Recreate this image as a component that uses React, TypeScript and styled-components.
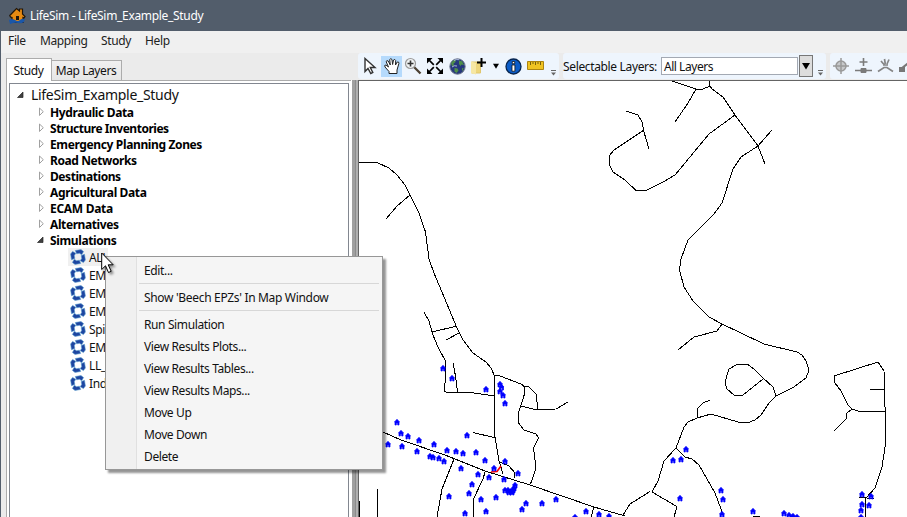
import React from "react";
import styled, { createGlobalStyle } from "styled-components";

const Global = createGlobalStyle`
  * { box-sizing: border-box; }
  html, body { margin: 0; padding: 0; overflow: hidden; }
  body { font-family: "Noto Sans", "Open Sans", sans-serif; font-size: 12px; color: #111; }
`;

const Label = styled.span<{ $track?: number }>`
  letter-spacing: ${(p) => p.$track ?? -0.35}px;
  white-space: pre;
`;

const Window = styled.div`
  width: 907px;
  height: 517px;
  overflow: hidden;
  display: flex;
  flex-direction: column;
  background: #ebebeb;
  border-left: 1px solid #525d6b;
`;

const TitleBar = styled.header`
  height: 31px;
  flex: none;
  display: flex;
  align-items: center;
  gap: 4px;
  padding-left: 8px;
  background: #525d6b;
  color: #fff;
`;

const MenuBar = styled.nav`
  height: 22px;
  flex: none;
  display: flex;
  align-items: center;
  padding: 0 0 3px 7px;
  background: #f0f0f0;
  color: #222;
`;

const MenuEntry = styled.div<{ $w: number }>`
  width: ${(p) => p.$w}px;
`;

const Body = styled.main`
  flex: 1;
  min-height: 0;
  display: flex;
`;

const Sidebar = styled.aside`
  width: 350px;
  flex: none;
  display: flex;
  flex-direction: column;
  padding: 5px 0 0 5px;
`;

const Tabs = styled.div`
  display: flex;
  align-items: flex-end;
  height: 22px;
  flex: none;
`;

const Tab = styled.div<{ $active?: boolean; $w: number }>`
  width: ${(p) => p.$w}px;
  height: ${(p) => (p.$active ? 23 : 20)}px;
  margin-bottom: ${(p) => (p.$active ? -1 : 0)}px;
  position: relative;
  z-index: ${(p) => (p.$active ? 1 : 0)};
  display: flex;
  align-items: center;
  justify-content: center;
  border: 1px solid #acacac;
  border-left-width: ${(p) => (p.$active ? 1 : 0)}px;
  border-bottom: 0;
  padding-right: 1px;
  background: ${(p) => (p.$active ? "#fff" : "linear-gradient(#f0f0f0, #e6e6e6)")};
`;

const TabPage = styled.div`
  flex: 1;
  min-height: 0;
  border: 1px solid #acacac;
  border-bottom: 0;
  border-right: 0;
  background: #fff;
  padding: 2px 0 0 2px;
  display: flex;
`;

const Tree = styled.div`
  width: 340px;
  border: 1px solid #828790;
  border-bottom: 0;
  background: #fff;
  padding-top: 3px;
`;

const TreeRow = styled.div<{ $indent: number; $h: number }>`
  display: flex;
  align-items: center;
  height: ${(p) => p.$h}px;
  padding-left: ${(p) => p.$indent}px;
`;

const Arrow = styled.svg`
  flex: none;
  width: 10px;
  height: 10px;
  margin-right: 3px;
`;

const RootRow = styled(TreeRow)`
  padding-bottom: 2px;
`;

const RootName = styled(Label)`
  font-size: 14px;
  margin-left: 1px;
`;

const GroupName = styled(Label)`
  font-weight: 700;
  color: #000;
`;

const SimItem = styled.div<{ $hover?: boolean }>`
  display: flex;
  align-items: center;
  gap: 3px;
  height: 18px;
  width: 50px;
  margin-left: 58px;
  padding-left: 2px;
  background: ${(p) => (p.$hover ? "linear-gradient(90deg, #f0f0f0 40px, transparent 40px)" : "transparent")};
`;

const Splitter = styled.div`
  width: 8px;
  flex: none;
  margin-top: 27px;
  background: linear-gradient(90deg, #fff 0 1px, #a0a0a0 1px 2px, #a0a0a0 2px 4px, #8c8c8c 4px 5px, #b0b0b0 5px 7px, #646464 7px 8px);
`;

const Workspace = styled.section`
  flex: 1;
  min-width: 0;
  display: flex;
  flex-direction: column;
`;

const Toolbars = styled.div`
  height: 27px;
  flex: none;
  display: flex;
  gap: 4px;
  overflow: hidden;
  margin-left: -1px;
`;

const Toolbar = styled.div<{ $w: number }>`
  width: ${(p) => p.$w}px;
  flex: none;
  height: 26px;
  display: flex;
  align-items: center;
  background: #eef5fd;
  border-radius: 3px;
`;

const Tool = styled.div<{ $w?: number; $on?: boolean }>`
  width: ${(p) => p.$w ?? 22}px;
  height: 21px;
  flex: none;
  display: flex;
  align-items: center;
  justify-content: center;
  background: ${(p) => (p.$on ? "#b5dafc" : "transparent")};
`;

const Combo = styled.div`
  width: 137px;
  height: 18px;
  margin-left: 4px;
  padding-left: 2px;
  line-height: 17px;
  border: 1px solid #a3a9b3;
  background: #fff;
`;

const ComboButton = styled.div`
  width: 14px;
  height: 22px;
  margin-left: 1px;
  border: 1px solid #777;
  background: #ddd;
  display: flex;
  align-items: center;
  justify-content: center;
`;

const MapArea = styled.div`
  flex: 1;
  min-height: 0;
  border-top: 1px solid #646464;
  background: #fff;
  overflow: hidden;
`;

const ContextMenu = styled.div`
  position: absolute;
  left: 105px;
  top: 256px;
  width: 278px;
  height: 214px;
  border: 1px solid #979797;
  background: linear-gradient(90deg, #f0f0f0 0 30px, #e0e0e0 30px 31px, #f5f5f5 31px);
  box-shadow: 3px 3px 2px rgba(0, 0, 0, 0.42);
  padding: 3px 3px 2px 31px;
`;

const MenuItem = styled.div`
  height: 22px;
  line-height: 22px;
  padding-left: 7px;
`;

const Divider = styled.div`
  height: 1px;
  margin: 1px 0 3px 2px;
  background: #d7d7d7;
`;

const Cursor = styled.svg`
  position: absolute;
  left: 101px;
  top: 252px;
  filter: drop-shadow(2px 2px 1px rgba(0, 0, 0, 0.4));
`;

const Icon = styled.svg`
  flex: none;
`;

const HouseLogo = () => (
  <Icon width="17" height="17" viewBox="0 0 17 17">
    <path d="M.8 8.500 7.500 1.500 10.500 4V2h3v5l2.500 2.500-1 1.500-1-.5v5H3v-5L1.500 10z" fill="#e68a12" stroke="#20160a" strokeWidth="1.200" />
    <path d="M7 9h3v4H7z" fill="#20160a" />
    <path d="M0 13q3-2 6 0t5 0 5-1l-1 3q-3 2-6 1t-8 1z" fill="#1b57a8" />
  </Icon>
);

const SimIcon = () => (
  <Icon width="16" height="16" viewBox="0 0 16 16">
    <g fill="#1d45a0" stroke="#5b9fd0" strokeWidth=".6" strokeLinejoin="round">
      {[0, 90, 180, 270].map((a) => (
        <path key={a} transform={`rotate(${a} 8 8)`} d="M5.300 1.500 11 .6 13.600 2.600 11.700 5.800 9.500 4.300 6.600 4.800z" />
      ))}
    </g>
  </Icon>
);

const Overflow = styled.svg`
  flex: none;
  align-self: flex-end;
  margin: 0 2px 3px auto;
`;

const OverflowMark = () => (
  <Overflow width="7" height="6" viewBox="0 0 7 6">
    <path d="M1 .5h5" stroke="#666" />
    <path d="M1 2.500h5L3.500 5.500z" fill="#666" />
  </Overflow>
);

const Down = ({ s = 8 }: { s?: number }) => (
  <Icon width={s} height={s} viewBox="0 0 8 8"><path d="M0 1h8L4 7.500z" fill="#000" /></Icon>
);

const PointerIcon = () => (
  <Icon width="16" height="18" viewBox="0 0 16 18">
    <path d="M3 1.500v13l3-3 2.800 5 2-1-2.500-5H13z" fill="#fff" stroke="#333" strokeWidth="1.400" />
  </Icon>
);

const HandIcon = () => (
  <Icon width="18" height="18" viewBox="0 0 18 18">
    <path d="M6 16.500v-2L2 10Q1 7.800 3 8L5.500 10 3.200 4.800Q3.500 2.800 5.200 4L7.300 8 6.700 2.500Q7.800.8 9 2.500L9.600 7.500 10.500 3Q11.800 1.600 12.700 3.500L12.500 8 14.200 5Q16.200 4.500 15.900 6.500L14 13v3.500z" fill="#fff" stroke="#222" strokeWidth="1" />
  </Icon>
);

const ZoomIcon = () => (
  <Icon width="18" height="18" viewBox="0 0 18 18">
    <path d="m10 10 6.500 6.500" stroke="#4b4032" strokeWidth="2.300" />
    <circle cx="6.500" cy="6.500" r="5" fill="#f1f4f5" stroke="#9b9b9b" strokeWidth="1.200" />
    <path d="M3.500 6.500h6M6.500 3.500v6" stroke="#333" strokeWidth="1.600" />
  </Icon>
);

const ExtentIcon = () => (
  <Icon width="16" height="16" viewBox="0 0 16 16">
    <path d="M0 0h5.500L0 5.500zM16 0v5.500L10.500 0zM0 16v-5.500L5.500 16zM16 16h-5.500l5.500-5.500z" fill="#000" />
    <path d="m2 2 4.800 4.800M14 2 9.200 6.800M2 14l4.800-4.800M14 14 9.200 9.200" stroke="#000" strokeWidth="1.700" />
  </Icon>
);

const GlobeIcon = () => (
  <Icon width="17" height="17" viewBox="0 0 17 17">
    <circle cx="8.500" cy="8.500" r="7.700" fill="#26387c" stroke="#71798e" />
    <path d="M2 5 5 1.800 7 2.500 6 4.500 4.500 5.500 5 7.500 3 8zM10 2.500l3 .8 2 3.700-2.500-.5-1 1.500-1.500-2zM5.500 10l3 .5 1 2-2 2.500L5.500 13.500zM13 10l1.800.5-1.800 3z" fill="#4f8f48" />
    <path d="M5 2.500q2-1.500 5-.8M3 9q2-2 5-1" stroke="#a9b7da" fill="none" />
  </Icon>
);

const AddLayerIcon = () => (
  <Icon width="18" height="18" viewBox="0 0 18 18">
    <path d="M1.500 5h9v11h-9z" fill="#edd67c" stroke="#e0c66c" />
    <path d="m1 4.500 5 1.500v11.500l-5-1.500z" fill="#f6e7a4" />
    <path d="M7 5.500h9M11.500 1v9" stroke="#000" strokeWidth="2" />
  </Icon>
);

const InfoIcon = () => (
  <Icon width="17" height="17" viewBox="0 0 17 17">
    <circle cx="8.500" cy="8.500" r="7.500" fill="#0b5cc8" stroke="#07254f" strokeWidth="1.300" />
    <path d="M7.300 3.500h2.400v2.200H7.300zM7 7h2.900v6.200H7z" fill="#fff" stroke="#111" strokeWidth=".8" />
  </Icon>
);

const RulerIcon = () => (
  <Icon width="17" height="10" viewBox="0 0 17 10">
    <path d="M.5.5h16v8H.5z" fill="#f0c321" stroke="#ac8411" />
    <path d="M3.500 1v3M6 1v2M8.500 1v3M11 1v2M13.500 1v3" stroke="#79600b" />
  </Icon>
);

const TargetIcon = () => (
  <Icon width="16" height="16" viewBox="0 0 16 16" fill="none" stroke="#999">
    <circle cx="8" cy="8" r="5" strokeWidth="1.500" fill="#c6c8ca" /><path d="M8 0v16M0 8h16" strokeWidth="1.500" />
  </Icon>
);

const NodeAddIcon = () => (
  <Icon width="17" height="16" viewBox="0 0 17 16" stroke="#7b7b7b" fill="#7b7b7b">
    <path d="M8.500 0v8M4.500 4h8M0 12.500h17" strokeWidth="1.600" /><path d="M6 10.500h5v4H6z" />
  </Icon>
);

const SplitIcon = () => (
  <Icon width="17" height="16" viewBox="0 0 17 16" stroke="#858585" fill="none" strokeWidth="1.700">
    <path d="m1 13.500 6-4h3l6 4M4 3l3 3.500M7.500 1l.8 5M12 1.500l-2 4.500M6 7h5" />
  </Icon>
);

const LinkIcon = () => (
  <Icon width="16" height="16" viewBox="0 0 16 16">
    <path d="M1 9h6v5H1zM10 2h5v5h-5z" fill="#777" /><path d="m4 10 9-7" stroke="#777" strokeWidth="2" />
  </Icon>
);

const ROADS = [
  "M359 162.500L370 162L378 163L389 168L397 175L405 185L410 195L419 213L425.500 232L429 259L434 273L457 328L463 340L473 353L486 362L491 368L494.500 376L495 437L499 461L503 474",
  "M410 195L397 206L386 219",
  "M424 312L429 321L433 335L438 347L446 362L445.500 379L444 391L446.500 392.500L471 392.500L494.500 396",
  "M432 332L457 326M446 340L459 333M453 363L455.500 376L457.500 392",
  "M494.500 375.500L500 376L521 384L525 387L524.500 394L519 411L518.500 423L524 430L536 434L538.500 438L533.500 448L536 468L530.500 484",
  "M524 386L529 387L536 394L538 409M521 406L535 409.500L556 409L568 402",
  "M473 432.500L496 438",
  "M383 432L401 440L445 455L485 471L530 485L594 507L625 516",
  "M454 459L442 489L437 517M485 472L483 479L473 500L473 517",
  "M500 462L509 466L515 473L514.500 478M377.500 489V517M359.500 501V517M594 507L591 517M623 515L630 504L650 491.500",
  "M672 81L696 89L703 89L710 86L709 81M710 86L712 89L723 97L735 115L758 146L772 130M758 146L765 164",
  "M696 89L688 103L675 122M735 115L709 134L675 175L663 182L647 190L636 190.500L625 180L613 172L609 164L609 156L614 150L641 132L644 130M626 111L638 115L642 122L644 132L649 149",
  "M758 146L741 157L733 169L722 203L714 214L688 240L681 259L679.500 270L684 287L693 301L709 317L722 324L764 344L797 352L802 355L806 361L809 370L806 378L794 387L776 396L769 403L761 415L755 420L747 423L738 422L711 414L697 418L688 422L684 427L676 448L664 461L658 481L652 492L676 506L676 510L674 517",
  "M722 324L717 331L694 337L678 350M776 396L773 387L763 378L754 369L747 364L738 364L729 369L725 382L727 389L734 395L743 395L763 379",
  "M710 400L703 403L697 409L698 417M676 448L685 457L692 459L699 465L715 493L724 517",
  "M852 409L847 413L846 419L834 431M834 376L835 383L841 391L848 405L852 409L858 411H885M834 376L878 362L884 371L886 441L882 467L875 488L866 498L865 517M870 389H885M859 497L874 499",
  "M753 516.500H760",
];

const HOUSES: [number, number][] = [
  [443,368],[452,378],[486,389],[500,384],[501.500,387],[500,391],[503,395],[505,403],
  [397,422],[401,433],[408,436],[419,440],[388,444],[402,446],[434,444],[417,451],[430,456],[433,457],[439,458],[444,461],
  [447,450],[456,451],[463,453],[467,435],[476,452],[485,460],[461,468],[478,474],[489,477],[494,468],[505,461],[518,473],[504,479],[515,485],[514,488],[505,490],[508,490],[509,492],[511,491],[512,492],[513,490],
  [472,484],[469,493],[449,496],[481,499],[496,497],[486,511],[465,513],[526,503],[522,509],[542,503],[556,499],[586,511],[599,514],[609,516],[575,517],
  [686,449],[673,460],[681,459],[680,498],[721,490],[723,499],[722,514],[753,511],[784,513],[789,515],[793,516],[797,517],[862,494],[871,496],[862,504],[869,505],[861,510],[861,517],
];

const MapView = () => (
  <svg width="548" height="436" viewBox="359 81 548 436">
    <g fill="none" stroke="#000" strokeWidth="1" strokeLinejoin="round" shapeRendering="crispEdges">
      {ROADS.map((d) => <path key={d} d={d} />)}
    </g>
    <path d="M491 472L497 471.500L501 466" fill="none" stroke="#f00" strokeWidth="1.700" />
    {HOUSES.map(([x, y], i) => (
      <path key={i} transform={`translate(${x} ${y})`} d="M-2.500 0 0-2.700 2.500 0H2V3H.7V1H-.7V3H-2V0z" fill="#00f" stroke="#00f" strokeWidth=".7" />
    ))}
  </svg>
);

const Expander = ({ open }: { open?: boolean }) => (
  <Arrow viewBox="0 0 10 10">
    {open
      ? <path d="M6 2v5.500H.5z" fill="#404040" stroke="#262626" strokeWidth=".7" />
      : <path d="M2.500 1 6.300 4.700 2.500 8.500z" fill="#fff" stroke="#a0a0a0" />}
  </Arrow>
);

const GROUPS: [string, number][] = [
  ["Hydraulic Data", -0.35], ["Structure Inventories", -0.48], ["Emergency Planning Zones", -0.37], ["Road Networks", -0.42],
  ["Destinations", -0.43], ["Agricultural Data", -0.37], ["ECAM Data", -0.3], ["Alternatives", -0.4], ["Simulations", -0.38],
];

const SIMS = ["ALL", "EM", "EM", "EM", "Spi", "EM", "LL_", "Ind"];

export default function App() {
  return (
    <>
      <Global />
      <Window>
        <TitleBar><HouseLogo /><Label $track={-0.32}>LifeSim - LifeSim_Example_Study</Label></TitleBar>
        <MenuBar>
          <MenuEntry $w={32}><Label>File</Label></MenuEntry>
          <MenuEntry $w={61}><Label $track={-0.4}>Mapping</Label></MenuEntry>
          <MenuEntry $w={44}><Label>Study</Label></MenuEntry>
          <MenuEntry $w={40}><Label $track={-0.35}>Help</Label></MenuEntry>
        </MenuBar>
        <Body>
          <Sidebar>
            <Tabs>
              <Tab $active $w={46}><Label>Study</Label></Tab>
              <Tab $w={70}><Label $track={-0.42}>Map Layers</Label></Tab>
            </Tabs>
            <TabPage>
              <Tree>
                <RootRow $indent={7} $h={17}><Expander open /><RootName $track={-0.3}>LifeSim_Example_Study</RootName></RootRow>
                {GROUPS.map(([name, track]) => (
                  <TreeRow key={name} $indent={27} $h={16}>
                    <Expander open={name === "Simulations"} /><GroupName $track={track}>{name}</GroupName>
                  </TreeRow>
                ))}
                {SIMS.map((s, i) => <SimItem key={i} $hover={i === 0}><SimIcon /><Label>{s}</Label></SimItem>)}
              </Tree>
            </TabPage>
          </Sidebar>
          <Splitter />
          <Workspace>
            <Toolbars>
              <Toolbar $w={201}>
                <Tool $w={23}><PointerIcon /></Tool><Tool $w={21} $on><HandIcon /></Tool><Tool><ZoomIcon /></Tool><Tool><ExtentIcon /></Tool>
                <Tool><GlobeIcon /></Tool><Tool><AddLayerIcon /></Tool><Tool $w={12}><Down s={6} /></Tool><Tool><InfoIcon /></Tool><Tool><RulerIcon /></Tool>
                <OverflowMark />
              </Toolbar>
              <Toolbar $w={263}>
                <Label>Selectable Layers:</Label><Combo><Label $track={-0.45}>All Layers</Label></Combo><ComboButton><Down /></ComboButton><OverflowMark />
              </Toolbar>
              <Toolbar $w={100}>
                <Tool><TargetIcon /></Tool><Tool><NodeAddIcon /></Tool><Tool><SplitIcon /></Tool><Tool $w={19}><LinkIcon /></Tool>
              </Toolbar>
            </Toolbars>
            <MapArea><MapView /></MapArea>
          </Workspace>
        </Body>
      </Window>
      <ContextMenu>
        <MenuItem><Label>Edit...</Label></MenuItem>
        <Divider />
        <MenuItem><Label $track={-0.32}>Show 'Beech EPZs' In Map Window</Label></MenuItem>
        <Divider />
        {["Run Simulation", "View Results Plots...", "View Results Tables...", "View Results Maps...", "Move Up", "Move Down", "Delete"].map((t) => (
          <MenuItem key={t}><Label $track={-0.38}>{t}</Label></MenuItem>
        ))}
      </ContextMenu>
      <Cursor width="14" height="22" viewBox="0 0 14 22">
        <path d="M.7 1v16.500l3.800-3.700 3 6.700 2.700-1.200-3-6.500h5z" fill="#fff" stroke="#000" />
      </Cursor>
    </>
  );
}
